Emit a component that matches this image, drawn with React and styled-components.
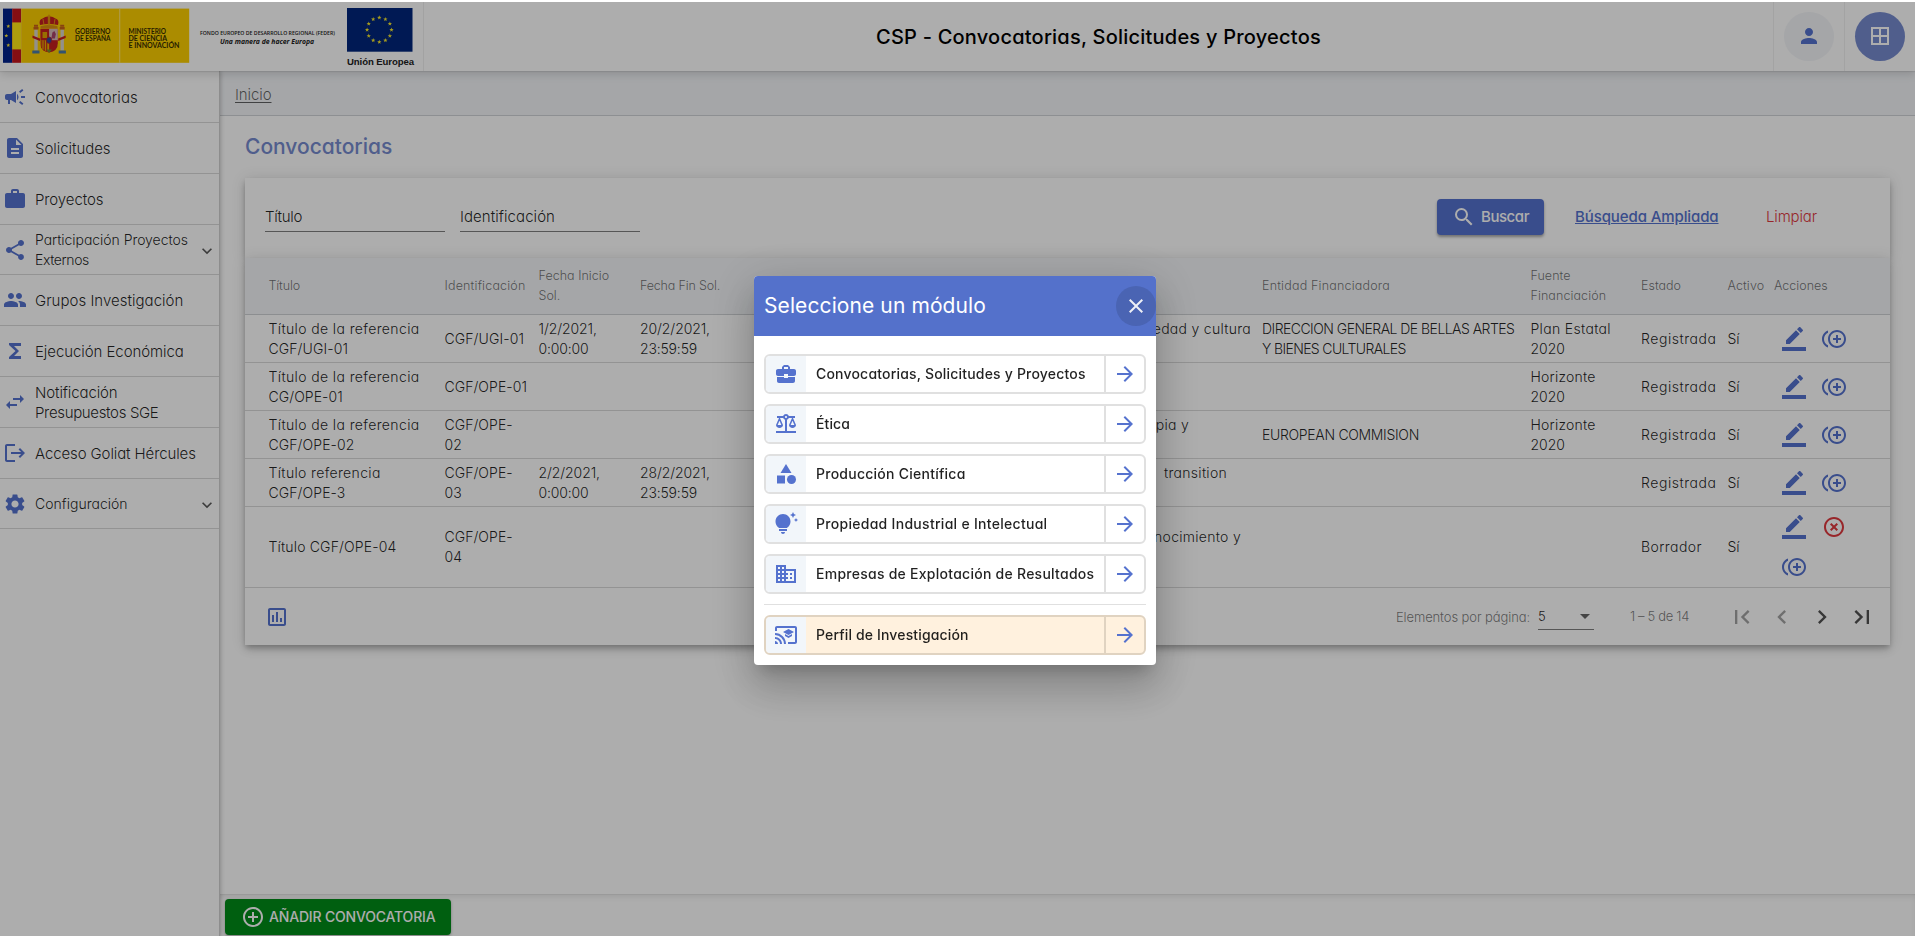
import React from 'react';
import styled, { createGlobalStyle, css } from 'styled-components';
import {
  MdCampaign, MdDescription, MdWork, MdShare, MdPeople, MdFunctions, MdSwapHoriz, MdLogout,
  MdSettings, MdExpandMore, MdSearch, MdControlPoint, MdControlPointDuplicate, MdHighlightOff,
  MdOutlineInsertChart, MdFirstPage, MdLastPage, MdChevronLeft, MdChevronRight, MdArrowDropDown,
  MdArrowForward, MdBusinessCenter, MdBalance, MdCategory, MdTipsAndUpdates, MdBusiness,
  MdCastForEducation, MdClose, MdPerson, MdBorderAll,
} from 'react-icons/md';

const blue = '#5572ce';
const line = '#d9d9d9';
const tint = '#f3f5f8';

const GlobalStyle = createGlobalStyle`
  * { box-sizing: border-box; }
  body {
    margin: 0;
    background: #fff;
    font-family: Inter, "Open Sans", sans-serif;
    font-feature-settings: "cv11";
    font-weight: 300;
    font-size: 14px;
    line-height: 20px;
    color: rgba(0, 0, 0, 0.87);
    overflow: hidden;
  }
  svg { display: block; flex: none; }
`;

const Txt = styled.span`
  letter-spacing: ${(p) => p.$ls || 0}px;
  white-space: nowrap;
`;

/* ---------- shell ---------- */
const Shell = styled.div`
  display: flex;
  flex-direction: column;
  height: 936px;
`;
const Header = styled.header`
  position: relative;
  z-index: 3;
  flex: none;
  display: flex;
  height: 71px;
  background: #fff;
  border-top: 2px solid #fff;
  box-shadow: 0 1px 1px rgba(0, 0, 0, 0.08), 0 4px 8px rgba(0, 0, 0, 0.12);
`;
const Logos = styled.div`
  display: flex;
  align-items: flex-start;
  width: 424px;
  padding: 6px 0 0 3px;
  border-right: 1px solid #efefef;
`;
const AppTitle = styled.h1`
  flex: 1;
  margin: 0;
  padding-left: 452px;
  align-self: center;
  font-size: 20px;
  font-weight: 500;
  line-height: 30px;
  color: #000;
`;
const HeaderSlot = styled.div`
  display: flex;
  align-items: center;
  justify-content: center;
  width: 71px;
  padding-bottom: 1px;
  border-left: 1px solid #f0f0f0;
`;
const RoundButton = styled.div`
  display: flex;
  align-items: center;
  justify-content: center;
  width: 50px;
  height: 49px;
  border-radius: 50%;
  background: ${(p) => (p.$solid ? '#768bcf' : tint)};
  color: ${(p) => (p.$solid ? '#fff' : blue)};
`;
const Body = styled.div`
  flex: 1;
  display: flex;
  min-height: 0;
`;

/* ---------- logos ---------- */
const Feder = styled.div`
  flex: none;
  width: 157px;
  padding: 21px 0 0 10px;
  font-family: "Open Sans", sans-serif;
  color: #222;
`;
const FederTop = styled.div`
  font-size: 5.2px;
  font-weight: 600;
  line-height: 9px;
  white-space: nowrap;
`;
const FederBottom = styled.div`
  padding-left: 20px;
  font-size: 6.85px;
  font-style: italic;
  font-weight: 700;
  line-height: 7px;
  white-space: nowrap;
`;
const EuBlock = styled.div`
  flex: none;
  width: 66px;
`;
const EuName = styled.div`
  padding-top: 3px;
  font-family: "Liberation Sans", Arial, sans-serif;
  font-size: 9.6px;
  font-weight: 700;
  line-height: 13px;
  letter-spacing: -0.1px;
  color: #222;
  white-space: nowrap;
`;

/* ---------- sidebar ---------- */
const Sidebar = styled.nav`
  position: relative;
  z-index: 2;
  flex: none;
  width: 220px;
  padding-top: 1px;
  background: #fff;
  border-right: 1px solid #d0d0d0;
  box-shadow: 1px 0 4px rgba(0, 0, 0, 0.2);
`;
const NavItem = styled.div`
  display: flex;
  align-items: center;
  gap: 8px;
  height: ${(p) => p.$h}px;
  padding-left: 3px;
  border-bottom: 1px solid ${line};
  font-size: ${(p) => (p.$small ? 14 : 15)}px;
  svg:first-child { color: ${blue}; }
`;
const NavLabel = styled.span`
  flex: 1;
  display: flex;
  flex-direction: column;
  padding-top: 1px;
`;
const Caret = styled(MdExpandMore)`
  width: 20px;
  height: 20px;
  margin: 3px 2px 0 0;
  color: rgba(0, 0, 0, 0.65);
`;

/* ---------- main ---------- */
const Main = styled.main`
  flex: 1;
  display: flex;
  flex-direction: column;
  min-width: 0;
`;
const Breadcrumb = styled.div`
  height: 45px;
  padding: 14px 15px 0;
  background: ${tint};
  border-bottom: 1px solid #d0d3d7;
  font-size: 15px;
  color: rgba(0, 0, 0, 0.6);
  text-decoration: underline;
  text-underline-offset: 2px;
`;
const Content = styled.section`
  flex: 1;
  padding: 16px 25px 0;
`;
const Heading = styled.h2`
  margin: 0 0 16px;
  font-size: 21px;
  font-weight: 500;
  line-height: 30px;
  color: #768bcf;
`;
const cardShadow = css`
  box-shadow: 0 3px 5px -1px rgba(0, 0, 0, 0.2), 0 5px 8px rgba(0, 0, 0, 0.13), 0 1px 14px rgba(0, 0, 0, 0.12);
`;
const SearchCard = styled.div`
  display: flex;
  align-items: flex-start;
  height: 80px;
  padding: 21px 20px 0;
  background: #fff;
  ${cardShadow}
`;
const Field = styled.div`
  width: 180px;
  height: 33px;
  margin-right: 15px;
  padding-top: 8px;
  border-bottom: 1px solid rgba(0, 0, 0, 0.5);
  font-size: 15px;
`;
const Spacer = styled.div`
  flex: 1;
`;
const SearchButton = styled.div`
  display: flex;
  align-items: center;
  gap: 5px;
  width: 107px;
  height: 36px;
  padding-left: 15px;
  border-radius: 4px;
  background: ${blue};
  color: #fff;
  font-size: 15px;
  font-weight: 500;
  box-shadow: 0 2px 3px rgba(0, 0, 0, 0.35);
`;
const AdvancedLink = styled.div`
  width: 222px;
  padding: 8px 0 0 31px;
  font-size: 15px;
  font-weight: 500;
  color: ${blue};
  text-decoration: underline;
`;
const ClearLink = styled.div`
  width: 104px;
  padding-top: 8px;
  font-size: 15px;
  color: #e0393e;
`;

/* ---------- table ---------- */
const TableCard = styled.div`
  position: relative;
  background: #fff;
  ${cardShadow}
`;
const Row = styled.div`
  display: grid;
  grid-template-columns: 176px 94px 101.5px 100px 522px 268.5px 110.5px 86.5px 46.5px 1fr;
  align-items: center;
  height: ${(p) => p.$h}px;
  padding-left: 23.5px;
  border-bottom: 1px solid ${line};
  ${(p) => p.$head && css`
    background: ${tint};
    font-size: 12.5px;
    color: rgba(0, 0, 0, 0.56);
    border-bottom-color: #ced1d4;
  `}
`;
const Cell = styled.div`
  display: flex;
  flex-direction: column;
  align-items: flex-start;
`;
const TopicCell = styled.div`
  display: flex;
  justify-content: flex-end;
  height: 40px;
  padding-right: ${(p) => 11 + (p.$shift || 0)}px;
`;
const Actions = styled.div`
  display: flex;
  flex-wrap: wrap;
  width: 80px;
`;
const ActionButton = styled.div`
  display: flex;
  align-items: center;
  justify-content: center;
  width: 40px;
  height: 40px;
  color: ${(p) => (p.$danger ? '#e0393e' : blue)};
`;
const Footer = styled.div`
  display: flex;
  align-items: center;
  height: 57px;
  padding-left: 20px;
  padding-right: 8px;
  font-size: 13px;
  color: rgba(0, 0, 0, 0.54);
`;
const ChartIcon = styled(MdOutlineInsertChart)`
  color: ${blue};
`;
const PageSize = styled.div`
  display: flex;
  align-items: center;
  width: 56px;
  height: 27px;
  margin: 0 36px 0 8px;
  border-bottom: 1px solid rgba(0, 0, 0, 0.5);
  color: rgba(0, 0, 0, 0.87);
  svg { margin-left: auto; margin-right: -3px; color: rgba(0, 0, 0, 0.6); }
`;
const Range = styled.div`
  width: 92px;
  padding-bottom: 2px;
`;
const PageButton = styled.div`
  display: flex;
  align-items: center;
  justify-content: center;
  width: 40px;
  height: 40px;
  color: rgba(0, 0, 0, ${(p) => (p.$off ? 0.36 : 0.68)});
`;
const BottomBar = styled.div`
  height: 42px;
  padding: 5px 0 0 5px;
  box-shadow: inset 0 1px 1px rgba(0, 0, 0, 0.05), inset 0 4px 6px -2px rgba(0, 0, 0, 0.1);
`;
const AddButton = styled.div`
  display: flex;
  align-items: center;
  gap: 4px;
  width: 226px;
  height: 36px;
  padding-left: 16px;
  border-radius: 4px;
  background: #008c19;
  color: #fff;
  font-weight: 500;
  box-shadow: 0 1px 3px rgba(0, 0, 0, 0.3);
`;

/* ---------- dialog ---------- */
const Backdrop = styled.div`
  position: fixed;
  inset: 2px 0 0;
  z-index: 10;
  display: flex;
  justify-content: center;
  align-items: flex-start;
  padding: 274px 5px 0 0;
  background: rgba(0, 0, 0, 0.32);
`;
const Dialog = styled.div`
  width: 402px;
  height: 389px;
  border-radius: 4px;
  background: #fff;
  overflow: hidden;
  box-shadow: 0 11px 15px -7px rgba(0, 0, 0, 0.2), 0 24px 38px 3px rgba(0, 0, 0, 0.14),
    0 9px 46px 8px rgba(0, 0, 0, 0.12);
`;
const DialogHead = styled.div`
  display: flex;
  align-items: center;
  justify-content: space-between;
  height: 60px;
  padding-left: 10px;
  background: #5471cb;
  color: #fff;
  font-size: 21px;
  font-weight: 400;
`;
const CloseButton = styled.div`
  display: flex;
  align-items: center;
  justify-content: center;
  width: 40px;
  height: 40px;
  border-radius: 50%;
  background: #4a64b3;
  color: #eef0f6;
`;
const DialogList = styled.div`
  display: flex;
  flex-direction: column;
  gap: 10px;
  padding: 18px 10px 0;
`;
const Divider = styled.div`
  height: 1px;
  background: #e0e0e0;
`;
const edge = (p) => (p.$warm ? '#e0d3c1' : '#e0e0e0');
const Module = styled.div`
  display: flex;
  height: 40px;
  border: 2px solid ${edge};
  border-radius: 6px;
  background: ${(p) => (p.$warm ? '#fff1de' : '#fff')};
  overflow: hidden;
  font-weight: 450;
`;
const ModuleIcon = styled.div`
  display: flex;
  align-items: center;
  justify-content: center;
  width: 40px;
  background: #f2f6fa;
  color: ${blue};
`;
const ModuleName = styled.div`
  flex: 1;
  padding: 8px 0 0 10px;
`;
const ModuleArrow = styled.div`
  display: flex;
  align-items: center;
  justify-content: center;
  width: 40px;
  border-left: 2px solid ${edge};
  color: ${blue};
`;

const nav = [
  { icon: MdCampaign, h: 51, lines: [['Convocatorias', 0.08]] },
  { icon: MdDescription, h: 51, lines: [['Solicitudes', -0.05]] },
  { icon: MdWork, h: 51, lines: [['Proyectos', -0.1]] },
  { icon: MdShare, h: 50, small: true, caret: true, lines: [['Participación Proyectos', -0.05], ['Externos', -0.4]] },
  { icon: MdPeople, h: 51, lines: [['Grupos Investigación', 0.02]] },
  { icon: MdFunctions, h: 51, lines: [['Ejecución Económica', -0.07]] },
  { icon: MdSwapHoriz, h: 51, lines: [['Notificación', -0.12], ['Presupuestos SGE', -0.34]] },
  { icon: MdLogout, h: 51, lines: [['Acceso Goliat Hércules', -0.11]] },
  { icon: MdSettings, h: 50, small: true, caret: true, lines: [['Configuración', 0.02]] },
];

const heads = [
  [['Título', -0.13]],
  [['Identificación', 0.18]],
  [['Fecha Inicio', 0.03], ['Sol.', 0]],
  [['Fecha Fin Sol.', -0.17]],
  [],
  [['Entidad Financiadora', 0.19]],
  [['Fuente', 0.03], ['Financiación', 0.08]],
  [['Estado', 0]],
  [['Activo', 0.1]],
  [['Acciones', 0]],
];

const rows = [
  {
    h: 48,
    title: [['Título de la referencia', 0.38], ['CGF/UGI-01', 0.1]],
    id: [['CGF/UGI-01', 0.1]],
    start: [['1/2/2021,', -0.09], ['0:00:00', -0.18]],
    end: [['20/2/2021,', -0.09], ['23:59:59', -0.18]],
    topic: 'Sociedad y cultura',
    org: [['DIRECCION GENERAL DE BELLAS ARTES', -0.54], ['Y BIENES CULTURALES', -0.64]],
    source: [['Plan Estatal', 0.33], ['2020', 0]],
  },
  {
    h: 48,
    title: [['Título de la referencia', 0.38], ['CG/OPE-01', 0.06]],
    id: [['CGF/OPE-01', 0.06]],
    source: [['Horizonte', 0.22], ['2020', 0]],
  },
  {
    h: 48,
    title: [['Título de la referencia', 0.38], ['CGF/OPE-02', 0.1]],
    id: [['CGF/OPE-', 0.06], ['02', 0]],
    topic: 'terapia y',
    shift: 62,
    org: [['EUROPEAN COMMISION', -0.32]],
    source: [['Horizonte', 0.22], ['2020', 0]],
  },
  {
    h: 48,
    title: [['Título referencia', 0.35], ['CGF/OPE-3', 0.1]],
    id: [['CGF/OPE-', 0.06], ['03', 0]],
    start: [['2/2/2021,', -0.09], ['0:00:00', -0.18]],
    end: [['28/2/2021,', -0.09], ['23:59:59', -0.18]],
    topic: 'transition',
    shift: 24,
  },
  {
    h: 81,
    title: [['Título CGF/OPE-04', 0.16]],
    id: [['CGF/OPE-', 0.06], ['04', 0]],
    topic: 'conocimiento y',
    shift: 10,
    draft: true,
  },
];

const modules = [
  { icon: MdBusinessCenter, name: 'Convocatorias, Solicitudes y Proyectos', ls: 0.19 },
  { icon: MdBalance, name: 'Ética', ls: 0.1 },
  { icon: MdCategory, name: 'Producción Científica', ls: 0.25 },
  { icon: MdTipsAndUpdates, name: 'Propiedad Industrial e Intelectual', ls: 0.29 },
  { icon: MdBusiness, name: 'Empresas de Explotación de Resultados', ls: 0.26 },
];

function Lines({ of = [] }) {
  return of.map(([text, ls], i) => <Txt key={i} $ls={ls}>{text}</Txt>);
}

function EditIcon() {
  return (
    <svg width="24" height="24" viewBox="0 0 24 24" fill="currentColor">
      <path d="M17.75 7L14 3.25l-10 10V17h3.75l10-10zm2.96-2.96c.39-.39.39-1.02 0-1.41L18.37.29c-.39-.39-1.02-.39-1.41 0L15 2.25 18.75 6l1.96-1.96z" />
      <path d="M0 20h24v4H0z" />
    </svg>
  );
}

function GovernmentLogo() {
  return (
    <svg width="187" height="55" viewBox="0 0 187 55">
      <rect x="0" y="0.6" width="9.4" height="54.2" fill="#00218b" />
      <g fill="#ffe83a">
        <path d="M5.3 16.2l.55 1.3 1.4.1-1.1.9.35 1.35-1.2-.7-1.2.7.35-1.35-1.1-.9 1.4-.1z" />
        <path d="M3.3 25.7l.55 1.3 1.4.1-1.1.9.35 1.35-1.2-.7-1.2.7.35-1.35-1.1-.9 1.4-.1z" />
        <path d="M5.3 35.2l.55 1.3 1.4.1-1.1.9.35 1.35-1.2-.7-1.2.7.35-1.35-1.1-.9 1.4-.1z" />
      </g>
      <rect x="9.2" y="0.6" width="9" height="54.2" fill="#c5161d" />
      <rect x="9.2" y="14.4" width="9" height="27" fill="#ffe714" />
      <rect x="18.2" y="0.6" width="168" height="54.2" fill="#fdcf00" />
      <rect x="116.3" y="0.6" width="0.9" height="54.2" fill="#ffe98a" />
      {/* coat of arms */}
      <g>
        <path d="M37 17q-1.6-5.5 2.6-6.6q2-2 6.4-2.2q4.4.2 6.4 2.2q4.2 1.1 2.6 6.6q-9-2-18 0z" fill="#c4201f" />
        <path d="M37.5 18.2q8.5-2.6 17 0v2h-17z" fill="#d98e12" />
        <path d="M45.3 7h1.4v10h-1.4zM40 11l1 6M52 11l-1 6" fill="#d98e12" stroke="#e8a30c" strokeWidth=".8" />
        <path d="M37.4 20.8h17.4v14.5q0 8-8.7 9.2q-8.7-1.2-8.7-9.2z" fill="#c4201f" />
        <path d="M46.1 20.8h8.7v11.4h-8.7z" fill="#d8bcb8" />
        <path d="M48.4 30.5l1-6 2-1.5 1.5 3-1 4.5z" fill="#a8446a" />
        <path d="M39.5 24h4.6v6h-4.6z" fill="#e0a200" />
        <path d="M37.4 32.2h8.7v11.6q-8.7-1.4-8.7-8.6z" fill="#e8b000" />
        <path d="M38.8 32.2v8M41.2 32.2v10.5M43.7 32.2v11" stroke="#c4201f" strokeWidth="1.1" />
        <ellipse cx="46.1" cy="32.2" rx="2.7" ry="3.2" fill="#2d4598" stroke="#c4201f" strokeWidth=".8" />
        <path d="M43.3 41.5h5.6l-2.8 3.5z" fill="#6f8f2d" />
        <path d="M31.3 21.5h3.4v21h-3.4zM57.5 21.5h3.4v21h-3.4z" fill="#d9d5cd" />
        <path d="M30.5 19h5v2.5h-5zM56.7 19h5v2.5h-5zM31 16.8h4v2h-4zM57.2 16.8h4v2h-4z" fill="#c9631a" />
        <path d="M29.5 27.5l7.5 3v2.5l-7.5-3zM62.7 27.5l-7.5 3v2.5l7.5-3z" fill="#c4201f" />
        <path d="M29.3 42.5h7.2v3h-7.2zM55.7 42.5h7.2v3h-7.2z" fill="#4a7ba6" />
      </g>
      <g fontFamily="Lato, sans-serif" fontWeight="700" fontSize="6.5" fill="#3a2f00">
        <text x="72" y="25.9" textLength="35.5" lengthAdjust="spacingAndGlyphs">GOBIERNO</text>
        <text x="72" y="33" textLength="35.5" lengthAdjust="spacingAndGlyphs">DE ESPAÑA</text>
        <text x="125.5" y="25.9" textLength="37.5" lengthAdjust="spacingAndGlyphs">MINISTERIO</text>
        <text x="125.5" y="33" textLength="38.5" lengthAdjust="spacingAndGlyphs">DE CIENCIA</text>
        <text x="125.5" y="40.1" textLength="51" lengthAdjust="spacingAndGlyphs">E INNOVACIÓN</text>
      </g>
    </svg>
  );
}

function EuFlag() {
  const stars = Array.from({ length: 12 }, (_, i) => {
    const a = (i * Math.PI) / 6;
    const cx = 32.3 + 12.2 * Math.sin(a);
    const cy = 21.8 - 12.2 * Math.cos(a);
    return Array.from({ length: 10 }, (_, k) => {
      const r = k % 2 ? 0.95 : 2.3;
      const b = (k * Math.PI) / 5;
      return `${(cx + r * Math.sin(b)).toFixed(2)},${(cy - r * Math.cos(b)).toFixed(2)}`;
    }).join(' ');
  });
  return (
    <svg width="66" height="44" viewBox="0 0 66 44">
      <rect x="0" y="0" width="65.5" height="43.7" fill="#00257c" />
      {stars.map((points, i) => <polygon key={i} points={points} fill="#f5e62c" />)}
    </svg>
  );
}

function ModuleLink({ icon: Icon, name, ls, warm }) {
  return (
    <Module $warm={warm}>
      <ModuleIcon><Icon size={24} /></ModuleIcon>
      <ModuleName><Txt $ls={ls}>{name}</Txt></ModuleName>
      <ModuleArrow $warm={warm}><MdArrowForward size={24} /></ModuleArrow>
    </Module>
  );
}

export default function App() {
  return (
    <>
      <GlobalStyle />
      <Shell>
        <Header>
          <Logos>
            <GovernmentLogo />
            <Feder>
              <FederTop>FONDO EUROPEO DE DESARROLLO REGIONAL (FEDER)</FederTop>
              <FederBottom>Una manera de hacer Europa</FederBottom>
            </Feder>
            <EuBlock>
              <EuFlag />
              <EuName>Unión Europea</EuName>
            </EuBlock>
          </Logos>
          <AppTitle><Txt $ls={0.22}>CSP - Convocatorias, Solicitudes y Proyectos</Txt></AppTitle>
          <HeaderSlot><RoundButton><MdPerson size={24} /></RoundButton></HeaderSlot>
          <HeaderSlot><RoundButton $solid><MdBorderAll size={24} /></RoundButton></HeaderSlot>
        </Header>
        <Body>
          <Sidebar>
            {nav.map(({ icon: Icon, h, lines, small, caret }, i) => (
              <NavItem key={i} $h={h} $small={small}>
                <Icon size={24} />
                <NavLabel><Lines of={lines} /></NavLabel>
                {caret && <Caret />}
              </NavItem>
            ))}
          </Sidebar>
          <Main>
            <Breadcrumb><Txt $ls={-0.09}>Inicio</Txt></Breadcrumb>
            <Content>
              <Heading><Txt $ls={-0.02}>Convocatorias</Txt></Heading>
              <SearchCard>
                <Field><Txt $ls={-0.29}>Título</Txt></Field>
                <Field><Txt $ls={0.06}>Identificación</Txt></Field>
                <Spacer />
                <SearchButton><MdSearch size={24} /><Txt $ls={-0.45}>Buscar</Txt></SearchButton>
                <AdvancedLink><Txt $ls={-0.1}>Búsqueda Ampliada</Txt></AdvancedLink>
                <ClearLink><Txt $ls={-0.15}>Limpiar</Txt></ClearLink>
              </SearchCard>
              <TableCard>
                <Row $head $h={57}>
                  {heads.map((h, i) => <Cell key={i}><Lines of={h} /></Cell>)}
                </Row>
                {rows.map((r, i) => (
                  <Row key={i} $h={r.h}>
                    <Cell><Lines of={r.title} /></Cell>
                    <Cell><Lines of={r.id} /></Cell>
                    <Cell><Lines of={r.start} /></Cell>
                    <Cell><Lines of={r.end} /></Cell>
                    <TopicCell $shift={r.shift}><Txt $ls={0.28}>{r.topic}</Txt></TopicCell>
                    <Cell><Lines of={r.org} /></Cell>
                    <Cell><Lines of={r.source} /></Cell>
                    <Cell><Txt $ls={r.draft ? 0.43 : 0.55}>{r.draft ? 'Borrador' : 'Registrada'}</Txt></Cell>
                    <Cell>Sí</Cell>
                    <Actions>
                      <ActionButton><EditIcon /></ActionButton>
                      {r.draft && <ActionButton $danger><MdHighlightOff size={24} /></ActionButton>}
                      <ActionButton><MdControlPointDuplicate size={24} /></ActionButton>
                    </Actions>
                  </Row>
                ))}
                <Footer>
                  <ChartIcon size={24} />
                  <Spacer />
                  <Txt $ls={-0.1}>Elementos por página:</Txt>
                  <PageSize>5<MdArrowDropDown size={24} /></PageSize>
                  <Range><Txt $ls={-0.33}>1 – 5 de 14</Txt></Range>
                  <PageButton $off><MdFirstPage size={28} /></PageButton>
                  <PageButton $off><MdChevronLeft size={28} /></PageButton>
                  <PageButton><MdChevronRight size={28} /></PageButton>
                  <PageButton><MdLastPage size={28} /></PageButton>
                </Footer>
              </TableCard>
            </Content>
            <BottomBar>
              <AddButton><MdControlPoint size={24} /><Txt $ls={-0.18}>AÑADIR CONVOCATORIA</Txt></AddButton>
            </BottomBar>
          </Main>
        </Body>
      </Shell>
      <Backdrop>
        <Dialog>
          <DialogHead>
            <Txt $ls={0.1}>Seleccione un módulo</Txt>
            <CloseButton><MdClose size={24} /></CloseButton>
          </DialogHead>
          <DialogList>
            {modules.map((m) => <ModuleLink key={m.name} {...m} />)}
            <Divider />
            <ModuleLink icon={MdCastForEducation} name="Perfil de Investigación" ls={0.15} warm />
          </DialogList>
        </Dialog>
      </Backdrop>
    </>
  );
}
